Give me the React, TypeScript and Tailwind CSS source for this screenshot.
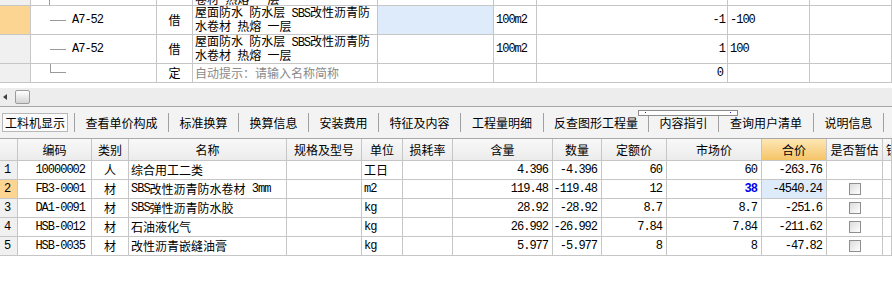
import React from 'react';

// 宋体风格：中文用 Noto Sans CJK，半角字符用等宽字体压紧
const cjk = "font-['Noto_Sans_CJK_SC',sans-serif]";
const mono = "font-['Liberation_Mono','Noto_Sans_CJK_SC',monospace] tracking-[-1px]";
const bd = 'border-r border-b border-[#c6c6c6]';

const Mixed: React.FC<{ text: string }> = ({ text }) => (
  <>
    {text.split(/([\x20-\x7E]+)/).map((part, i) =>
      /^[\x20-\x7E]+$/.test(part) ? (
        <span key={i} className={`${mono} whitespace-pre`}>{part}</span>
      ) : (
        <span key={i}>{part}</span>
      )
    )}
  </>
);

const TopGrid: React.FC = () => (
  <div className="grid grid-cols-[31px_126px_36px_185px_116px_43px_191px_82px_1fr] text-[12px] leading-[12px]">
    {/* 上一行（被截断） */}
    <div className={`${bd} h-[6px] bg-[#f0f0f0]`} />
    <div className={`${bd} h-[6px] pl-[18px]`}><div className="h-full w-px bg-[#9a9a9a]" /></div>
    <div className={`${bd} h-[6px]`} />
    <div className={`${bd} h-[6px] overflow-hidden pl-[2px]`}><div className="-mt-[7px]"><Mixed text="卷材 热熔 一层" /></div></div>
    <div className={`${bd} h-[6px]`} />
    <div className={`${bd} h-[6px]`} />
    <div className={`${bd} h-[6px]`} />
    <div className={`${bd} h-[6px]`} />
    <div className={`${bd} h-[6px]`} />

    {[
      { head: 'bg-[#fdd592]', cell: 'bg-[#deebfa]', qty: '-1', v: '-100' },
      { head: 'bg-[#f0f0f0]', cell: '', qty: '1', v: '100' },
    ].map((r, i) => (
      <React.Fragment key={i}>
        <div className={`${bd} h-[29px] ${r.head}`} />
        <div className={`${bd} h-[29px] flex items-center pl-[19px]`}>
          <span className="w-[16px] h-px bg-[#9a9a9a]" />
          <span className={`${mono} ml-[6px]`}>A7-52</span>
        </div>
        <div className={`${bd} h-[29px] flex items-center justify-center`}>借</div>
        <div className={`${bd} h-[29px] flex flex-col justify-center pl-[2px] overflow-hidden`}>
          <div className="whitespace-nowrap"><Mixed text="屋面防水 防水层 SBS改性沥青防" /></div>
          <div className="whitespace-nowrap"><Mixed text="水卷材 热熔 一层" /></div>
        </div>
        <div className={`${bd} h-[29px] ${r.cell}`} />
        <div className={`${bd} h-[29px] flex items-center pl-[2px] ${mono}`}>100m2</div>
        <div className={`${bd} h-[29px] flex items-center justify-end pr-[2px] ${mono}`}>{r.qty}</div>
        <div className={`${bd} h-[29px] flex items-center pl-[2px] ${mono}`}>{r.v}</div>
        <div className={`${bd} h-[29px]`} />
      </React.Fragment>
    ))}

    <div className={`${bd} h-[19px] bg-[#f0f0f0]`} />
    <div className={`${bd} h-[19px] pl-[19px]`}>
      <div className="w-[16px] h-[9px] border-l border-b border-[#9a9a9a]" />
    </div>
    <div className={`${bd} h-[19px] flex items-center justify-center`}>定</div>
    <div className={`${bd} h-[19px] flex items-center pl-[2px] text-[#8a8a8a] whitespace-nowrap`}>自动提示：请输入名称简称</div>
    <div className={`${bd} h-[19px]`} />
    <div className={`${bd} h-[19px]`} />
    <div className={`${bd} h-[19px] flex items-center justify-end pr-[4px] ${mono}`}>0</div>
    <div className={`${bd} h-[19px]`} />
    <div className={`${bd} h-[19px]`} />
  </div>
);

const tabs = [
  { label: '工料机显示', w: 'w-[75px]' },
  { label: '查看单价构成', w: 'w-[94px]' },
  { label: '标准换算', w: 'w-[70px]' },
  { label: '换算信息', w: 'w-[70px]' },
  { label: '安装费用', w: 'w-[70px]' },
  { label: '特征及内容', w: 'w-[82px]' },
  { label: '工程量明细', w: 'w-[83px]' },
  { label: '反查图形工程量', w: 'w-[105px]' },
  { label: '内容指引', w: 'w-[70px]' },
  { label: '查询用户清单', w: 'w-[95px]' },
  { label: '说明信息', w: 'w-[70px]' },
];

const TabBar: React.FC = () => (
  <div className="h-[32px] bg-[#f3f3f3] border-b border-[#a8a8a8] flex items-center text-[12px]">
    {tabs.map((t, i) => (
      <div key={t.label} className={`${t.w} h-[19px] flex items-center border-r border-[#a0a0a0]`}>
        {i === 0 ? (
          <div className="ml-[2px] w-[66px] h-[19px] flex items-center justify-center bg-[#fbfbfb] border border-[#b8b8b8]">{t.label}</div>
        ) : (
          <div className="w-full text-center whitespace-nowrap">{t.label}</div>
        )}
      </div>
    ))}
  </div>
);

type Row = {
  n: string; code: string; t: string; name: string; unit: string;
  hl: string; sl: string; de: string; sc: string; hj: string; cb: boolean; sel?: boolean;
};

const rows: Row[] = [
  { n: '1', code: '10000002', t: '人', name: '综合用工二类', unit: '工日', hl: '4.396', sl: '-4.396', de: '60', sc: '60', hj: '-263.76', cb: false },
  { n: '2', code: 'FB3-0001', t: '材', name: 'SBS改性沥青防水卷材 3mm', unit: 'm2', hl: '119.48', sl: '-119.48', de: '12', sc: '38', hj: '-4540.24', cb: true, sel: true },
  { n: '3', code: 'DA1-0091', t: '材', name: 'SBS弹性沥青防水胶', unit: 'kg', hl: '28.92', sl: '-28.92', de: '8.7', sc: '8.7', hj: '-251.6', cb: true },
  { n: '4', code: 'HSB-0012', t: '材', name: '石油液化气', unit: 'kg', hl: '26.992', sl: '-26.992', de: '7.84', sc: '7.84', hj: '-211.62', cb: true },
  { n: '5', code: 'HSB-0035', t: '材', name: '改性沥青嵌缝油膏', unit: 'kg', hl: '5.977', sl: '-5.977', de: '8', sc: '8', hj: '-47.82', cb: true },
];

const headers = ['', '编码', '类别', '名称', '规格及型号', '单位', '损耗率', '含量', '数量', '定额价', '市场价', '合价', '是否暂估', '锁定'];

const Checkbox: React.FC = () => (
  <span className="w-[12px] h-[12px] border border-[#8e8e8e] bg-gradient-to-br from-[#dcdcdc] to-white" />
);

const num = `${bd} h-[19px] flex items-center justify-end pr-[4px] ${mono}`;

const BottomGrid: React.FC = () => (
  <div className="grid grid-cols-[18px_74px_37px_158px_75px_41px_50px_100px_49px_65px_95px_65px_56px_1fr] text-[12px] leading-[12px]">
    {headers.map((h, i) => (
      <div
        key={i}
        className={`${bd} h-[22px] flex items-center whitespace-nowrap overflow-hidden ${
          i === 13 ? 'justify-start pl-[3px]' : 'justify-center'
        } ${i === 11 ? 'bg-gradient-to-b from-[#fde7b4] to-[#f5c466]' : 'bg-gradient-to-b from-[#f8f8f8] to-[#ececec]'}`}
      >
        {h}
      </div>
    ))}
    {rows.map((r) => (
      <React.Fragment key={r.n}>
        <div className={`${bd} h-[19px] flex items-center pl-[4px] ${mono} ${r.sel ? 'bg-[#fdd592]' : 'bg-[#f0f0f0]'}`}>{r.n}</div>
        <div className={num + ' pr-[6px]'}>{r.code}</div>
        <div className={`${bd} h-[19px] flex items-center justify-center`}>{r.t}</div>
        <div className={`${bd} h-[19px] flex items-center pl-[2px] whitespace-nowrap`}><Mixed text={r.name} /></div>
        <div className={`${bd} h-[19px]`} />
        <div className={`${bd} h-[19px] flex items-center pl-[2px]`}><Mixed text={r.unit} /></div>
        <div className={`${bd} h-[19px]`} />
        <div className={num}>{r.hl}</div>
        <div className={num}>{r.sl}</div>
        <div className={num}>{r.de}</div>
        <div className={num}>
          {r.sel ? <span className="text-[#0000ee] font-bold">{r.sc}</span> : r.sc}
        </div>
        <div className={`${num} ${r.sel ? 'bg-[#deebfa]' : ''}`}>{r.hj}</div>
        <div className={`${bd} h-[19px] flex items-center justify-center`}>{r.cb && <Checkbox />}</div>
        <div className={`${bd} h-[19px]`} />
      </React.Fragment>
    ))}
  </div>
);

const App: React.FC = () => (
  <div className={`relative w-[892px] h-[302px] overflow-hidden bg-white text-black ${cjk}`}>
    <TopGrid />

    {/* 水平滚动条 */}
    <div className="mt-[5px] h-[19px] bg-[#ededed] border-b border-[#a8a8a8] flex items-center">
      <span className="ml-[3px] w-0 h-0 border-y-[3px] border-y-transparent border-r-[4px] border-r-[#404040]" />
      <span className="ml-[8px] w-[15px] h-[14px] rounded-[2px] border border-[#9c9c9c] bg-gradient-to-b from-white to-[#d4d4d4]" />
    </div>

    <TabBar />
    <BottomGrid />

    {/* 分隔条拖动手柄 */}
    <div className="absolute left-[638px] top-[110px] w-[100px] h-[6px] bg-white border border-[#8c8c8c]">
      <span className="absolute left-[6px] top-[1px] w-px h-px bg-[#2020c0]" />
      <span className="absolute right-[6px] top-[1px] w-px h-px bg-[#2020c0]" />
    </div>
  </div>
);

export default App;
